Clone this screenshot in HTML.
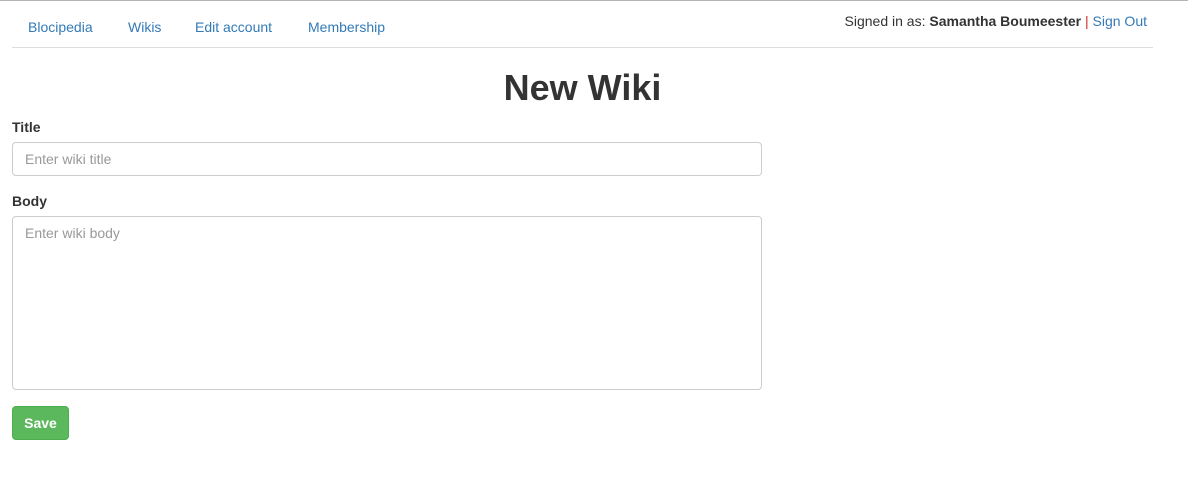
<!DOCTYPE html>
<html><head><style>
body{margin:0;background:#fff;font-family:"Liberation Sans",sans-serif;font-size:14px;color:#333;width:1188px;height:481px;overflow:hidden;position:relative}
.top{position:absolute;left:0;top:0;width:1188px;height:1px;background:#b4b4b4}
.nav a{position:absolute;top:19px;color:#337ab7;text-decoration:none;font-size:14px}
.hr{position:absolute;left:12px;top:47px;width:1141px;height:1px;background:#ddd}
.sign{position:absolute;right:41px;top:13px;font-size:14px}
.sign b{color:#333}
h1{position:absolute;top:67px;left:0;width:1165px;text-align:center;margin:0;font-size:36px;font-weight:bold;color:#333}
label{position:absolute;left:12px;font-weight:bold;font-size:14px}
.in{position:absolute;left:12px;width:750px;border:1px solid #ccc;border-radius:4px;color:#999;font-size:14px;box-sizing:border-box;padding:8px 12px}
.btn{position:absolute;left:12px;top:406px;width:57px;height:34px;background:#5cb85c;border:1px solid #4cae4c;border-radius:4px;color:#fff;font-weight:bold;box-sizing:border-box;text-align:center;line-height:32px}
</style></head><body>
<div class="top"></div>
<div class="nav"><a style="left:28px">Blocipedia</a><a style="left:128px">Wikis</a><a style="left:195px">Edit account</a><a style="left:308px">Membership</a></div>
<div class="sign">Signed in as: <b>Samantha Boumeester</b> <span style="color:#c9302c">|</span> <span style="color:#337ab7">Sign Out</span></div>
<div class="hr"></div>
<h1>New Wiki</h1>
<label style="top:119px">Title</label>
<div class="in" style="top:142px;height:34px">Enter wiki title</div>
<label style="top:193px">Body</label>
<div class="in" style="top:216px;height:174px">Enter wiki body</div>
<div class="btn">Save</div>
</body></html>
